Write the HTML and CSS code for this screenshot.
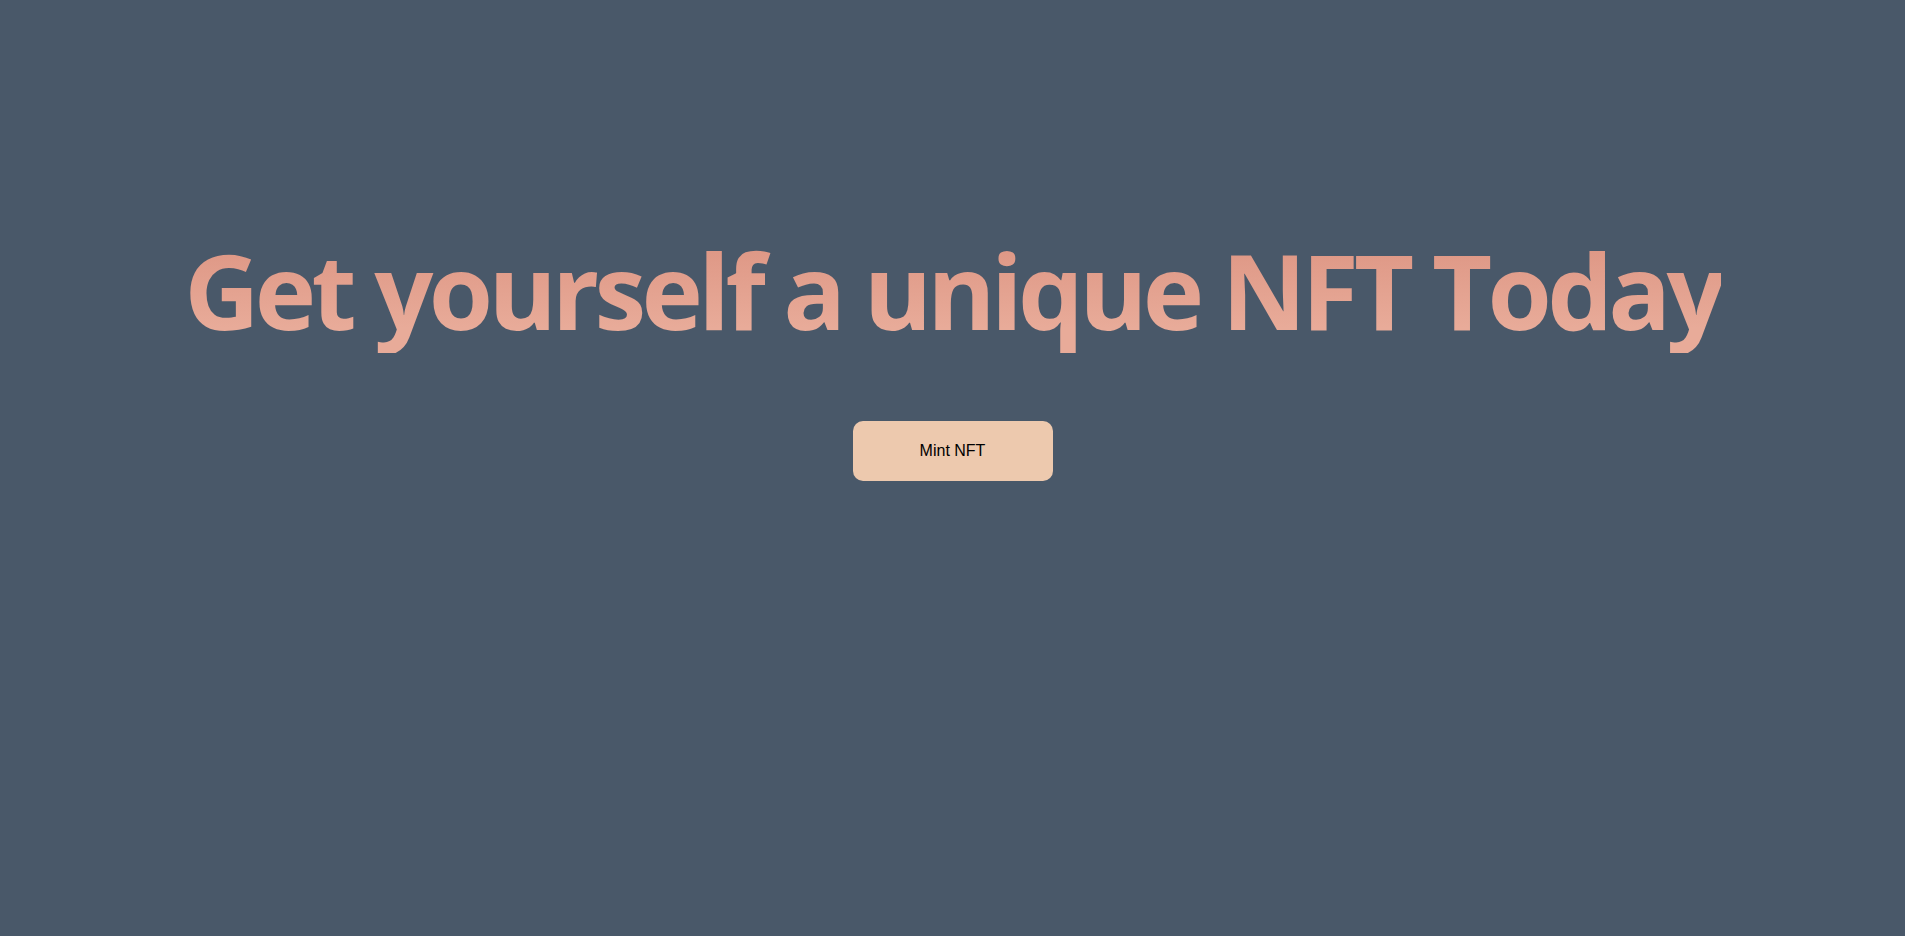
FILE: index.html
```html
<!DOCTYPE html>
<html lang="en">
<head>
<meta charset="utf-8">
<title>Mint NFT</title>
<link rel="stylesheet" href="styles.css">
</head>
<body>
<main class="hero">
  <h1 class="title">Get yourself a unique NFT Today</h1>
  <button class="mint-btn" type="button">Mint NFT</button>
</main>
</body>
</html>
```
FILE: styles.css
```css
html, body {
  margin: 0;
  padding: 0;
  height: 100%;
}
body {
  background: #495869;
  font-family: "Open Sans", "Noto Sans", sans-serif;
}
.hero {
  display: flex;
  flex-direction: column;
  align-items: center;
  padding-top: 228px;
}
.title {
  margin: 0;
  font-family: "Open Sans", "Noto Sans", sans-serif;
  font-size: 104px;
  font-weight: 700;
  line-height: 1.2;
  letter-spacing: -4.7px;
  background: linear-gradient(180deg, #df9987 20%, #e8ab99 80%);
  -webkit-background-clip: text;
  background-clip: text;
  color: transparent;
}
.mint-btn {
  margin-top: 68px;
  width: 200px;
  height: 60px;
  border: none;
  border-radius: 10px;
  background: #edc9ae;
  color: #000;
  font-family: "Liberation Sans", Arial, sans-serif;
  font-size: 16px;
}
```
